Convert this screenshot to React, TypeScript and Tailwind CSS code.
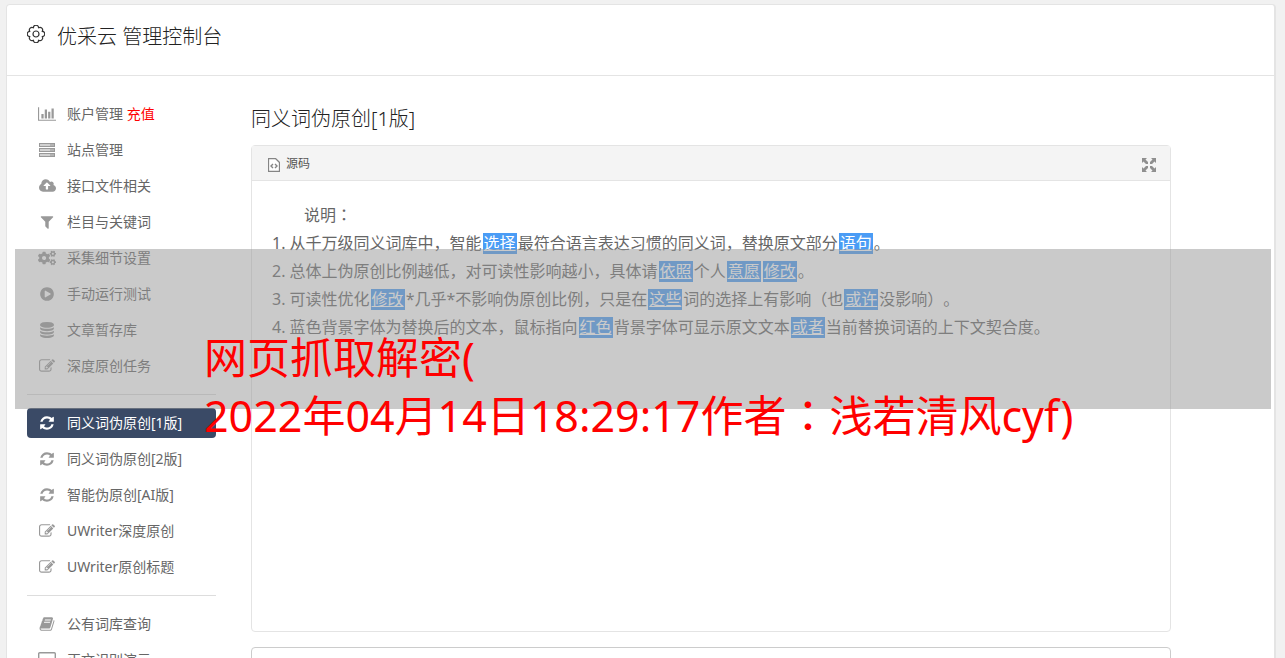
import type { ReactNode } from "react";
import { FaCogs } from "react-icons/fa";

type IconProps = {
  d: string;
  box?: string;
  className?: string;
};

const Icon = ({ d, box = "0 0 1792 1792", className = "h-4 w-4" }: IconProps) => (
  <svg className={className} fill="currentColor" viewBox={box}>
    <path d={d} />
  </svg>
);

const editPath =
  "M888 1184l116-116-152-152-116 116v56h96v96h56zm440-720q-16-16-33 1l-350 350q-17 17-1 33t33-1l350-350q17-17 1-33zm80 594v190q0 119-84.5 203.5t-203.5 84.5h-832q-119 0-203.5-84.5t-84.5-203.5v-832q0-119 84.5-203.5t203.5-84.5h832q63 0 117 25 15 7 18 23 3 17-9 29l-49 49q-14 14-32 8-23-6-45-6h-832q-66 0-113 47t-47 113v832q0 66 47 113t113 47h832q66 0 113-47t47-113v-126q0-13 9-22l64-64q15-15 35-7t20 29zm-96-738l288 288-672 672h-288v-288zm444 132l-92 92-288-288 92-92q28-28 68-28t68 28l152 152q28 28 28 68t-28 68z";
const refreshPath =
  "M1639 1056q0 5-1 7-64 268-268 434.5t-478 166.5q-146 0-282.5-55t-243.5-157l-129 129q-19 19-45 19t-45-19-19-45v-448q0-26 19-45t45-19h448q26 0 45 19t19 45-19 45l-137 137q71 66 161 102t187 36q134 0 250-65t186-179q11-17 53-117 8-23 30-23h192q13 0 22.5 9.5t9.5 22.5zm25-800v448q0 26-19 45t-45 19h-448q-26 0-45-19t-19-45 19-45l138-138q-148-137-349-137-134 0-250 65t-186 179q-11 17-53 117-8 23-30 23h-199q-13 0-22.5-9.5t-9.5-22.5v-7q65-268 270-434.5t480-166.5q146 0 284 55.5t245 156.5l130-129q19-19 45-19t45 19 19 45z";
const chartPath =
  "M640 896v512h-256v-512h256zm384-512v1024h-256v-1024h256zm1024 1152v128h-2048v-1536h128v1408h1920zm-640-896v768h-256v-768h256zm384-384v1152h-256v-1152h256z";
const cloudPath =
  "M1280 864q0-14-9-23l-352-352q-9-9-23-9t-23 9l-351 351q-10 12-10 24 0 14 9 23t23 9h224v352q0 13 9.5 22.5t22.5 9.5h192q13 0 22.5-9.5t9.5-22.5v-352h224q13 0 22.5-9.5t9.5-22.5zm640 288q0 159-112.5 271.5t-271.5 112.5h-1088q-185 0-316.5-131.5t-131.5-316.5q0-130 70-240t188-165q-2-30-2-43 0-212 150-362t362-150q156 0 285.5 87t188.5 231q71-62 166-62 106 0 181 75t75 181q0 76-41 138 130 31 213.5 135.5t83.5 238.5z";
const filterPath =
  "M1595 295q17 41-14 70l-493 493v742q0 42-39 59-13 5-25 5-27 0-45-19l-256-256q-19-19-19-45v-486l-493-493q-31-29-14-70 17-39 59-39h1280q42 0 59 39z";
const playPath =
  "M896 128q209 0 385.5 103t279.5 279.5 103 385.5-103 385.5-279.5 279.5-385.5 103-385.5-103-279.5-279.5-103-385.5 103-385.5 279.5-279.5 385.5-103zm384 823q32-18 32-55t-32-55l-544-320q-31-19-64-1-32 19-32 56v640q0 37 32 56 16 8 32 8 17 0 32-9z";
const databasePath =
  "M896 768q237 0 443-43t325-127v170q0 69-103 128t-280 93.5-385 34.5-385-34.5-280-93.5-103-128v-170q119 84 325 127t443 43zm0 768q237 0 443-43t325-127v170q0 69-103 128t-280 93.5-385 34.5-385-34.5-280-93.5-103-128v-170q119 84 325 127t443 43zm0-384q237 0 443-43t325-127v170q0 69-103 128t-280 93.5-385 34.5-385-34.5-280-93.5-103-128v-170q119 84 325 127t443 43zm0-1152q208 0 385 34.5t280 93.5 103 128v128q0 69-103 128t-280 93.5-385 34.5-385-34.5-280-93.5-103-128v-128q0-69 103-128t280-93.5 385-34.5z";
const bookPath =
  "M1703 478q40 57 18 129l-275 906q-19 64-76.5 107.5t-122.5 43.5h-923q-77 0-148.5-53.5t-99.5-131.5q-24-67-2-127 0-4 3-27t4-37q1-8-3-21.5t-3-19.5q2-11 8-21t16.5-23.5 16.5-23.5q23-38 45-91.5t30-91.5q3-10 .5-30t-.5-28q3-11 17-28t17-23q21-36 42-92t25-90q1-9-2.5-32t.5-28q4-13 22-30.5t22-22.5q19-26 42.5-84.5t27.5-96.5q1-8-3-25.5t-2-26.5q2-8 9-18t18-23 17-21q8-12 16.5-30.5t15-35 16-36 19.5-32 26.5-23.5 36-11.5 47.5 5.5l-1 3q38-9 51-9h761q74 0 114 56t18 130l-274 906q-36 119-71.5 153.5t-128.5 34.5h-869q-27 0-38 15-11 16-1 43 24 70 144 70h923q29 0 56-15.5t35-41.5l300-987q7-22 5-57 38 15 59 43zm-1064 2q-4 13 2 22.5t20 9.5h608q13 0 25.5-9.5t16.5-22.5l21-64q4-13-2-22.5t-20-9.5h-608q-13 0-25.5 9.5t-16.5 22.5zm-83 256q-4 13 2 22.5t20 9.5h608q13 0 25.5-9.5t16.5-22.5l21-64q4-13-2-22.5t-20-9.5h-608q-13 0-25.5 9.5t-16.5 22.5z";

const GearIcon = () => (
  <svg
    className="mt-1 h-[18px] w-[18px] text-[#333]"
    viewBox="-9 -9 18 18"
    fill="none"
    stroke="currentColor"
    strokeWidth="1.2"
    strokeLinejoin="round"
  >
    <path d="M6.2 2.6A2.6 2.6 0 0 1 2.6 6.2A2.6 2.6 0 0 1 -2.6 6.2A2.6 2.6 0 0 1 -6.2 2.6A2.6 2.6 0 0 1 -6.2 -2.6A2.6 2.6 0 0 1 -2.6 -6.2A2.6 2.6 0 0 1 2.6 -6.2A2.6 2.6 0 0 1 6.2 -2.6A2.6 2.6 0 0 1 6.2 2.6z" />
    <circle r="3" />
  </svg>
);

const ServerIcon = () => (
  <svg className="h-4 w-4" viewBox="0 0 16 16" fill="none" stroke="currentColor">
    <rect x="0.5" y="1.5" width="15" height="3" />
    <rect x="0.5" y="6.5" width="15" height="3" />
    <rect x="0.5" y="11.5" width="15" height="3" />
    <path d="M1 3h10M1 8h10M1 13h10" strokeWidth="2" opacity="0.45" />
    <path d="M11 3h4M11 8h4M11 13h4" strokeWidth="2" opacity="0.75" />
  </svg>
);

const DesktopIcon = () => (
  <svg className="h-4 w-[18px]" viewBox="0 0 18 16" fill="none" stroke="currentColor" strokeWidth="1.4">
    <rect x="0.7" y="0.7" width="16.6" height="12" rx="1" />
    <path d="M0.5 10h17M5 15.3h8M9 13v2" />
  </svg>
);

type Item = {
  icon: ReactNode;
  label: string;
  extra?: string;
  active?: boolean;
};

const groups: Item[][] = [
  [
    { icon: <Icon d={chartPath} box="0 0 2048 1792" className="h-4 w-[18px]" />, label: "账户管理", extra: "充值" },
    { icon: <ServerIcon />, label: "站点管理" },
    { icon: <Icon d={cloudPath} box="0 0 1920 1792" className="h-4 w-[17px]" />, label: "接口文件相关" },
    { icon: <Icon d={filterPath} />, label: "栏目与关键词" },
    { icon: <FaCogs className="h-4 w-[18px]" />, label: "采集细节设置" },
    { icon: <Icon d={playPath} />, label: "手动运行测试" },
    { icon: <Icon d={databasePath} />, label: "文章暂存库" },
    { icon: <Icon d={editPath} />, label: "深度原创任务" },
  ],
  [
    { icon: <Icon d={refreshPath} />, label: "同义词伪原创[1版]", active: true },
    { icon: <Icon d={refreshPath} />, label: "同义词伪原创[2版]" },
    { icon: <Icon d={refreshPath} />, label: "智能伪原创[AI版]" },
    { icon: <Icon d={editPath} />, label: "UWriter深度原创" },
    { icon: <Icon d={editPath} />, label: "UWriter原创标题" },
  ],
  [
    { icon: <Icon d={bookPath} />, label: "公有词库查询" },
    { icon: <DesktopIcon />, label: "正文识别演示" },
  ],
];

const MenuItem = ({ icon, label, extra, active }: Item) => (
  <li>
    <a
      href="#"
      className={
        active
          ? "flex h-[30px] items-center gap-2.5 rounded bg-[#3a4a66] px-2.5 text-white"
          : "flex h-[30px] items-center gap-2.5 rounded px-2.5 text-[#666]"
      }
    >
      <span className={active ? "flex w-5 justify-center" : "flex w-5 justify-center text-[#999]"}>
        {icon}
      </span>
      <span className="whitespace-nowrap">
        {label}
        {extra && <span className="text-[#f00]"> {extra}</span>}
      </span>
    </a>
  </li>
);

const Word = ({ children }: { children: ReactNode }) => (
  <span className="mx-px inline-block bg-[#4a9cf5] px-px leading-[21px] text-white underline">
    {children}
  </span>
);

// full-width colon set in the middle of its cell
const Colon = () => (
  <span lang="zh-TW" className="font-['Noto_Sans_CJK_TC',sans-serif] leading-none">
    ：
  </span>
);

const App = () => {
  return (
    <div
      lang="zh-CN"
      className="relative h-screen overflow-hidden bg-[#f1f1f1] pt-1 pr-[9px] pl-1.5 font-['Noto_Sans','Noto_Sans_CJK_SC',sans-serif] text-sm text-[#666] [text-spacing-trim:space-all]"
    >
      <div className="min-h-full rounded-t border border-r-2 border-[#e4e4e4] bg-white">
        <header className="flex h-[71px] items-start gap-3 border-b border-[#e4e4e4] px-5 pt-4">
          <GearIcon />
          <h1 className="text-xl leading-8 font-light text-[#222]">优采云 管理控制台</h1>
        </header>

        <div className="flex pt-[23px] pl-5">
          <nav className="w-[189px] shrink-0">
            {groups.map((items, i) => (
              <div key={i}>
                {i > 0 && <hr className="my-[13px] border-[#ddd]" />}
                <ul className="flex flex-col gap-1.5">
                  {items.map((item) => (
                    <MenuItem key={item.label} {...item} />
                  ))}
                </ul>
              </div>
            ))}
          </nav>

          <main className="mr-[103px] ml-[35px] min-w-0 flex-1 pt-1.5">
            <h2 className="mb-3 text-xl leading-7 font-light text-[#222]">同义词伪原创[1版]</h2>

            <section className="rounded border border-[#e4e4e4]">
              <div className="flex h-[35px] items-center justify-between border-b border-[#e4e4e4] bg-[#f4f4f4] pr-3.5 pl-4">
                <button type="button" className="flex items-center gap-1.5 pt-0.5 text-xs text-[#555]">
                  <svg className="mt-0.5 h-3.5 w-3" viewBox="0 0 12 14" fill="none" stroke="#858585">
                    <path d="M0.5 0.5h7l4 4v9h-11z" fill="#fff" strokeWidth="1.3" />
                    <path d="M5 6L3 8l2 2M7 6l2 2-2 2" strokeWidth="1.4" />
                  </svg>
                  源码
                </button>
                <button type="button" aria-label="全屏" className="mt-1 text-[#8f8f8f]">
                  <svg className="h-3.5 w-3.5" viewBox="0 0 14 14" fill="currentColor">
                    <path d="M0 0h5L3.5 1.5 6 4v2H4L1.5 3.5 0 5zM14 0v5l-1.5-1.5L10 6H8V4l2.5-2.5L9 0zM0 14V9l1.5 1.5L4 8h2v2l-2.5 2.5L5 14zM14 14H9l1.5-1.5L8 10V8h2l2.5 2.5L14 9z" />
                  </svg>
                </button>
              </div>
              <div className="min-h-[450px] px-5 pt-5 text-base leading-7">
                <p className="pl-8">
                  说明
                  <Colon />
                </p>
                <p>
                  1. 从千万级同义词库中，智能<Word>选择</Word>最符合语言表达习惯的同义词，替换原文部分
                  <Word>语句</Word>。
                </p>
                <p>
                  2. 总体上伪原创比例越低，对可读性影响越小，具体请<Word>依照</Word>个人<Word>意愿</Word>
                  <Word>修改</Word>。
                </p>
                <p>
                  3. 可读性优化<Word>修改</Word>*几乎*不影响伪原创比例，只是在<Word>这些</Word>
                  词的选择上有影响（也<Word>或许</Word>没影响）。
                </p>
                <p>
                  4. 蓝色背景字体为替换后的文本，鼠标指向<Word>红色</Word>背景字体可显示原文文本
                  <Word>或者</Word>当前替换词语的上下文契合度。
                </p>
              </div>
            </section>

            <div className="mt-[15px] h-24 rounded border border-[#ccc]" />
          </main>
        </div>
      </div>

      {/* caption band */}
      <div className="absolute top-[249px] right-3.5 left-[15px] h-40 bg-[#969696]/50 pt-20 pl-[189px] text-[43px] leading-[58px] whitespace-nowrap text-[#f00]">
        <p>网页抓取解密(</p>
        <p>
          2022年04月14日18:29:17作者
          <Colon />
          浅若清风cyf)
        </p>
      </div>
    </div>
  );
};

export default App;
